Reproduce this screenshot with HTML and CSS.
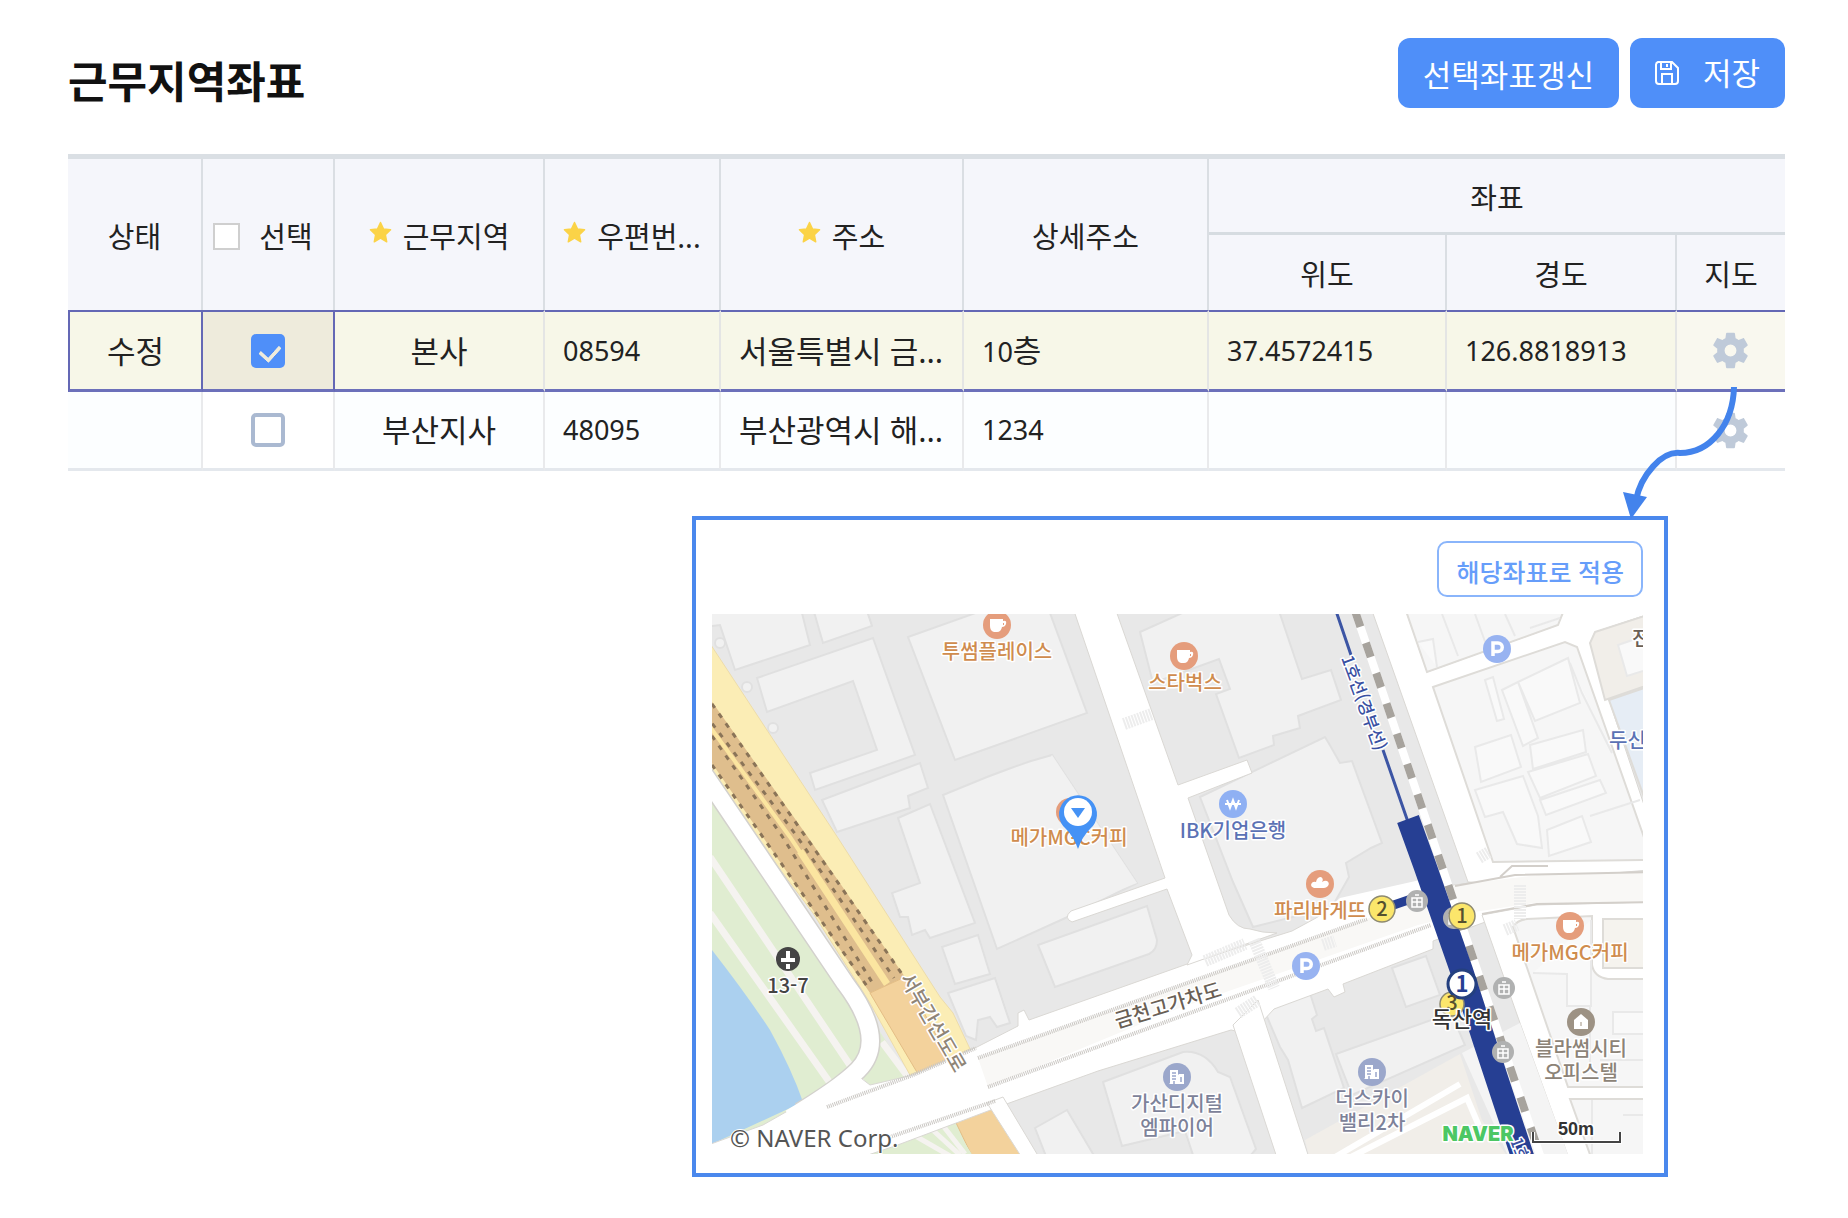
FILE: index.html
```html
<!DOCTYPE html>
<html lang="ko">
<head>
<meta charset="utf-8">
<meta name="viewport" content="width=device-width, initial-scale=1">
<title>근무지역좌표</title>
<link rel="stylesheet" href="styles.css">
</head>
<body>
<svg class="sprite" width="0" height="0" aria-hidden="true">
  <symbol id="star" viewBox="0 0 24 24"><path d="M12 1.5l3.2 6.8 7.3.9-5.4 5.1 1.4 7.4L12 18l-6.500 3.700 1.400-7.400L1.500 9.200l7.300-.9z" fill="#fbd347" stroke="#fbd347" stroke-width="1.500" stroke-linejoin="round"/></symbol>
  <symbol id="gear" viewBox="2 2 20 20"><path fill="#bfcad9" d="M19.140 12.940c.04-.3.06-.61.06-.94 0-.32-.02-.64-.07-.94l2.030-1.580c.18-.14.23-.41.12-.61l-1.920-3.320c-.12-.22-.37-.29-.59-.22l-2.390.96c-.5-.38-1.030-.7-1.620-.94l-.36-2.540c-.04-.24-.24-.41-.48-.41h-3.840c-.24 0-.43.17-.47.41l-.36 2.540c-.59.24-1.130.57-1.620.94l-2.390-.96c-.22-.08-.47 0-.59.22L2.740 8.870c-.12.21-.08.47.12.61l2.030 1.580c-.05.3-.09.63-.09.94s.02.64.07.94l-2.030 1.580c-.18.14-.23.41-.12.61l1.920 3.320c.12.22.37.29.59.22l2.390-.96c.5.38 1.030.7 1.620.94l.36 2.540c.05.24.24.41.48.41h3.840c.24 0 .44-.17.47-.41l.36-2.540c.59-.24 1.130-.56 1.620-.94l2.390.96c.22.08.47 0 .59-.22l1.920-3.320c.12-.22.07-.47-.12-.61l-2.010-1.580zM12 15.200A3.200 3.200 0 1 1 12 8.800a3.200 3.200 0 0 1 0 6.400z"/></symbol>
  <symbol id="cafe" viewBox="-14 -14 28 28"><circle r="14" fill="#e59d7c"/><path d="M-7-6H6v2q4-1 3 3-1 3-4 3-1 5-5 5h-3q-4-1-4-6z" fill="#fff"/><path d="M6-2v2h1v-2z" fill="#e59d7c"/></symbol>
  <symbol id="bread" viewBox="-14 -14 28 28"><circle r="14" fill="#e59d7c"/><path d="M-9 1q1-4 5-3 1-5 5-5 3 2 1 5 3-2 5-1 3 2 1 5-2 2-4 2h-10q-3-1-3-3z" fill="#fff"/></symbol>
  <symbol id="parking" viewBox="-14 -14 28 28"><circle r="14" fill="#98b3f1"/><path d="M-4 7V-6H1a4 4 0 0 1 0 8.500H-4" fill="none" stroke="#fff" stroke-width="3.500"/></symbol>
  <symbol id="bank" viewBox="-14 -14 28 28"><circle r="14" fill="#8fb0f3"/><path d="M-6-4l3 8 3-8 3 8 3-8M-8 0H8" fill="none" stroke="#fff" stroke-width="2"/></symbol>
  <symbol id="office" viewBox="-14 -14 28 28"><circle r="14" fill="#9ba7cb"/><path d="M-7 7V-7H1V7M2-3H7V7H-8" fill="#fff"/><path d="M-5-4h4M-5-1h4M-5 2h4M-3 7V4M4 0v5" stroke="#9ba7cb" stroke-width="1.500"/></symbol>
  <symbol id="home" viewBox="-14 -14 28 28"><circle r="14" fill="#9d9284"/><path d="M0-8l7 6v9H-7v-9z" fill="#fff"/><path d="M0 4V0" stroke="#cfc8bf" stroke-width="2"/></symbol>
  <symbol id="lift" viewBox="-11 -11 22 22"><circle r="11" fill="#b0b1b1"/><path d="M-5-3H5V6H-5zM-2-6H2M-5 1H5M0-3V6" fill="none" stroke="#fff" stroke-width="1.500"/></symbol>
</svg>

<header class="page-head">
  <h1 class="page-title">근무지역좌표</h1>
  <div class="actions">
    <button type="button" class="btn btn-refresh">선택좌표갱신</button>
    <button type="button" class="btn btn-save">
      <svg class="save-icon" viewBox="0 0 24 24" aria-hidden="true"><path d="M3 1h14l6 6v13a3 3 0 0 1-3 3H4a3 3 0 0 1-3-3V4a3 3 0 0 1 2-3zM6 1v7h10V1M12 3v3M7 22v-9h10v9" fill="none" stroke="#fff" stroke-width="2"/></svg>
      <span>저장</span>
    </button>
  </div>
</header>

<main>
  <table class="grid">
    <colgroup>
      <col class="c-state"><col class="c-check"><col class="c-region"><col class="c-zip"><col class="c-addr"><col class="c-detail"><col class="c-lat"><col class="c-lng"><col class="c-map">
    </colgroup>
    <thead>
      <tr class="head-top">
        <th rowspan="2">상태</th>
        <th rowspan="2"><label class="check-all"><input type="checkbox" class="box-all">선택</label></th>
        <th rowspan="2"><span class="required"><svg class="star" aria-hidden="true"><use href="#star"/></svg>근무지역</span></th>
        <th rowspan="2"><span class="required"><svg class="star" aria-hidden="true"><use href="#star"/></svg>우편번...</span></th>
        <th rowspan="2"><span class="required"><svg class="star" aria-hidden="true"><use href="#star"/></svg>주소</span></th>
        <th rowspan="2">상세주소</th>
        <th colspan="3" class="group">좌표</th>
      </tr>
      <tr class="head-sub">
        <th>위도</th><th>경도</th><th>지도</th>
      </tr>
    </thead>
    <tbody>
      <tr class="row selected">
        <td class="mid">수정</td>
        <td class="mid pick"><input type="checkbox" class="box" aria-label="본사 선택" checked></td>
        <td class="mid">본사</td>
        <td class="num">08594</td>
        <td>서울특별시 금...</td>
        <td class="num">10<span class="unit">층</span></td>
        <td class="num">37.4572415</td>
        <td class="num">126.8818913</td>
        <td class="mid tool"><button type="button" class="gear-btn" aria-label="본사 지도"><svg class="gear"><use href="#gear"/></svg></button></td>
      </tr>
      <tr class="row">
        <td class="mid"></td>
        <td class="mid pick"><input type="checkbox" class="box" aria-label="부산지사 선택"></td>
        <td class="mid">부산지사</td>
        <td class="num">48095</td>
        <td>부산광역시 해...</td>
        <td class="num">1234</td>
        <td></td>
        <td></td>
        <td class="mid tool"><button type="button" class="gear-btn" aria-label="부산지사 지도"><svg class="gear"><use href="#gear"/></svg></button></td>
      </tr>
    </tbody>
  </table>

  <section class="map-panel">
    <svg class="arrow" viewBox="1616 380 130 142" aria-hidden="true">
      <path d="M1734 387C1733 425 1710 453 1680 453C1662 451 1641 475 1636 500" fill="none" stroke="#4383ec" stroke-width="6"/>
      <path d="M1623 492l24 5-16 22z" fill="#4383ec"/>
    </svg>
    <button type="button" class="apply-btn">해당좌표로 적용</button>
    <svg class="map" viewBox="712 614 931 540" role="img" aria-label="지도">
      <rect x="712" y="614" width="931" height="540" fill="#e8e8e8"/>

      <!-- buildings, west -->
      <g class="bldg">
        <path d="M705 605h95l10 40-75 25-15-45-15 2z"/>
        <path d="M812 605l11 38 49-17-7-21z"/>
        <circle cx="720" cy="643" r="5"/><circle cx="747" cy="687" r="5"/><circle cx="773" cy="728" r="5"/>
        <path d="M757 678l116-40 42 117-100 35-5-17 67-23-24-69-86 31z"/>
        <path d="M908 637l90-32h49l40 108-132 47z"/>
        <path d="M822 800l98-37 8 25-20 8 2 12-73 24z"/>
        <path d="M898 818l32-14 45 119-45 15-5-8-13 5-4-18-8 0-8-24 28-10z"/>
        <path d="M943 795l44-18 24-9 20-7 21-6 85 128-65 32-75 34z"/>
        <path d="M1052 755l85 128-40 16-60-120z" stroke="none"/>
        <path d="M942 947l36-12 12 39-35 10z"/>
        <path d="M948 993l47-15 15 45-13 4-7-10-12 3-2 20-10-4z"/>
        <path d="M1038 945l109-39 10 34q0 10-8 14l-94 33z"/>
        <path d="M1103 1082l80-30q22-2 35 20l12 5 26 72-10 12h-51l-10-30-63 15z"/>
        <path d="M1035 1128l32-18 32 54h-50z"/>
      </g>
      <!-- buildings, middle -->
      <g class="bldg">
        <path d="M1140 632l60-27h77l25 74 29-9 10 30-43 16 2 12-27 8 1 9-35 13-23-64 14-5-11-30-22 8-44 16z"/>
        <path d="M1200 797l125-60 6 10 9 16 12-2 30 82-11 5-25 15 3 14-17 30-79 20-20-45z"/>
        <path d="M1262 1005l46-18 9 28-5 4 4 12 8-3 20 60-42 20-14-48-8-13z"/>
        <path d="M1392 968l34-12 14 39-34 12z"/>
        <path d="M1336 1054l115-41 14 32-113 50z"/>
      </g>

      <!-- riverside -->
      <path d="M712 780l200 300 45 40 20 34H712z" fill="#e0edd1"/>
      <path d="M712 950q35 45 58 80 22 40 33 72l-91 42z" fill="#abd0ef"/>
      <g fill="none" stroke="#f5f3f0" stroke-width="7"><path d="M710 857L868 1092M710 913L835 1090M882 1042l32 43"/></g>

      <!-- expressway -->
      <path d="M705 636L838 838 940 997l13 16 17 36-60 26-40-72-57-90L705 770z" fill="#fbedb5" stroke="#eddcaa"/>
      <path d="M705 692L810 840l95 137-35 16L758 830 705 753z" fill="#dfbe8d"/>
      <g fill="none" stroke="#8a7458" stroke-width="3" stroke-dasharray="5 7"><path d="M705 694L808 840l94 134M705 755l55 78 109 156M705 726l77 110 93 151M705 714L796 835l98 143"/></g>
      <path d="M705 720L790 837l96 145" fill="none" stroke="#fbe5a0" stroke-width="4"/>
      <path d="M800 851l87 133" fill="none" stroke="#fbe5a0" stroke-width="7"/>
      <path d="M870 993l35-16 46 86-33 11z" fill="#f3d29c" stroke="#e3bd85"/>
      <path d="M945 1100l42-2 40 62h-53z" fill="#f3d29c" stroke="#e3bd85"/>
      <path d="M880 1136l66-24 27 44H838z" fill="#e0edd1"/>
      <path d="M905 1130l45 26M925 1123l35 32M937 1118l28 36" stroke="#f5f3f0" stroke-width="5"/>

      <!-- streets -->
      <path d="M704 774L845 983Q888 1040 858 1070 840 1088 800 1112" fill="none" stroke="#d3d1cd" stroke-width="20"/>
      <g class="street">
        <path d="M700 1148L763 1125 800 1104 853 1072 870 1085 913 1075 977 1047 1018 1026V1013l6-3 5 10 161-57 102-32 48-26 87-15 28-5 84-12 120-2v33h-112l-48 13-66 24v8l-90 35 2 8-11 5-6-8-54 20-23 25-20-4-133 41-97 35-13 5-93 35-60 20H700z"/>
        <path d="M1233 1025l25-25 55 170h-32z"/>
        <path d="M987 1103l16-6 40 67h-17z"/>
        <path d="M1072 605h42l64 180 69-25 5 13-64 25 41 117q8 14 21 14 12 4 27 4l-90 32 5-10-25-66-95 33q-9-4-1-11l94-33z"/>
        <path d="M1370 605h34l23 67 131-47 8-20h95v5l-66 22-5 11 60 180v47l-157 13-25-1z"/>
        <path d="M1482 915l54-10 115-3v262h-80l-51-141z"/>
      </g>
      <path d="M704 774L845 983Q888 1040 858 1070 840 1088 790 1118" fill="none" stroke="#fff" stroke-width="17"/>
      <path d="M1340 898l80-18 30 20-100 32-60 10z" fill="#fff"/>

      <!-- east blocks -->
      <g class="block">
        <path d="M1404 605h162l-8 20-131 47z"/>
        <path d="M1433 687l132-45 12 5 75 213-159 2z"/>
        <path d="M1513 927q4-7 14-8l65-3v49q2 12 16 14h44v108h-84z"/>
        <path d="M1570 1099h82v61h-60z"/>
        <path d="M1595 632l56-18v70l-46 16-15-57z" fill="#f1eee9"/>
        <path d="M1609 700l44-15v137z" fill="#e6edf5"/>
        <path d="M1603 919h50v49h-50z" fill="#f5f3ee"/>
      </g>
      <g class="lot">
        <path d="M1418 642l15-3 4 28M1442 614l16 42M1475 614l12 33M1505 614l10 22M1530 628l30-10"/>
        <path d="M1475 747l36-12 10 32-40 15zM1530 745l53-15 3 22-53 17zM1485 680l8-3 11 42-7 2zM1502 690l16-8 20 56-15 8zM1518 682l50-24 12 45-45 18zM1528 772l60-18 8 22-56 22zM1540 800l60-20 6 13-60 22zM1475 790l48-14 15 40 4 32-25-4-14-32-18 5zM1547 830l35-14 9 26-42 14zM1590 816l50-16M1570 663l12 30 30 60"/>
        <path d="M1533 973l34 1v32h24v-86M1613 1012h40v22h-40zM1600 1060h50M1592 1100v54M1623 1115h30M1618 645l35-12v35l-26 8zM1590 1006v60"/>
      </g>
      <path d="M1305 1140l155-86 22 66 28 40h-200z" fill="#f1eee9"/>
      <path d="M1345 1160l122-62 12 28M1330 1160l130-76" fill="none" stroke="#fff" stroke-width="6"/>
      <path d="M1462 1053l58-30 50 137h-60z" fill="#f4f4f4"/>

      <!-- overpass -->
      <path d="M978 1058l212-76 177-63 88-34 84-10 114-3v31h-120l-65 10-50 12-241 84-189 78z" fill="#f9f8f6"/>
      <g fill="none" stroke="#c9c6c2" stroke-width="4" stroke-dasharray="1 1"><path d="M827 1107l86-32 63-27M978 1058l212-76 177-63M988 1087l202-74 241-88M890 1137l105-36"/></g>
      <g fill="none" stroke="#d3cfca" stroke-width="2"><path d="M1455 886l60-11 138-3M1482 914l55-10 115-2M1500 877l12-11h36"/></g>
      <g class="crossing"><path d="M1124 724l28-10M1205 961l40-17M1254 940l20 48M1238 1013l20-13M1520 885v34M1505 930l12-5M1323 945l12-4M1479 858l10-6"/></g>

      <!-- railway -->
      <path d="M1353 605l97 285 92 271" fill="none" stroke="#fff" stroke-width="8"/>
      <path d="M1353 605l97 285 92 271" fill="none" stroke="#a7a39d" stroke-width="8" stroke-dasharray="15 17" stroke-dashoffset="-8"/>
      <path d="M1382 909l35-12" stroke="#263f93" stroke-width="9"/>
      <path d="M1334 605l17 50M1383 750l25 72" stroke="#3c55a4" stroke-width="3"/>
      <path d="M1408 819l17 47 37 106 22 68 41 124" fill="none" stroke="#263f93" stroke-width="23"/>

      <!-- place markers -->
      <use href="#cafe" x="983" y="611" width="28" height="28"/>
      <use href="#cafe" x="1170" y="642" width="28" height="28"/>
      <use href="#cafe" x="1056" y="798" width="28" height="28"/>
      <use href="#cafe" x="1556" y="912" width="28" height="28"/>
      <use href="#bread" x="1306" y="870" width="28" height="28"/>
      <use href="#bank" x="1219" y="790" width="28" height="28"/>
      <use href="#parking" x="1483" y="635" width="28" height="28"/>
      <use href="#parking" x="1292" y="952" width="28" height="28"/>
      <use href="#office" x="1163" y="1063" width="28" height="28"/>
      <use href="#office" x="1358" y="1058" width="28" height="28"/>
      <use href="#home" x="1567" y="1008" width="28" height="28"/>
      <use href="#lift" x="1406" y="890" width="22" height="22"/>
      <use href="#lift" x="1443" y="907" width="22" height="22"/>
      <use href="#lift" x="1493" y="977" width="22" height="22"/>
      <use href="#lift" x="1492" y="1041" width="22" height="22"/>
      <g fill="#fbe66b" stroke="#8e8a70" stroke-width="1.500"><circle cx="1382" cy="909" r="13"/><circle cx="1462" cy="916" r="13"/><circle cx="1452" cy="1004" r="12"/></g>
      <circle cx="1462" cy="984" r="14" fill="#fff" stroke="#24407f" stroke-width="3"/>
      <circle cx="788" cy="959" r="12" fill="#444"/><path d="M788 951v8M781 960h14M788 964v5" stroke="#fff" stroke-width="4"/>

      <g class="label">
        <g class="exit"><text x="1382" y="916">2</text><text x="1462" y="923">1</text><text x="1452" y="1010">3</text></g>
        <text class="line-no" x="1462" y="992">1</text>
        <g class="food">
          <text x="997" y="659">투썸플레이스</text><text x="1185" y="690">스타벅스</text><text x="1069" y="845">메가MGC커피</text>
          <text x="1320" y="918">파리바게뜨</text><text x="1570" y="960">메가MGC커피</text>
        </g>
        <g class="bank"><text x="1233" y="838">IBK기업은행</text><text class="from-left" x="1609" y="748">두신</text></g>
        <g class="office"><text x="1177" y="1111">가산디지털</text><text x="1177" y="1135">엠파이어</text><text x="1372" y="1106">더스카이</text><text x="1372" y="1130">밸리2차</text></g>
        <g class="home"><text x="1581" y="1056">블라썸시티</text><text x="1581" y="1080">오피스텔</text></g>
        <text class="road from-left" x="1632" y="646">전</text>
        <text class="station" x="1462" y="1027">독산역</text>
        <text class="exit-no" x="788" y="993">13-7</text>
        <text class="road faint" transform="translate(927 1026) rotate(60)">서부간선도로</text>
        <text class="road" transform="translate(1170 1012) rotate(-17)">금천고가차도</text>
        <text class="rail" transform="translate(1358 705) rotate(70)">1호선(경부선)</text>
        <text class="rail" transform="translate(1514 1152) rotate(70)">1호</text>
        <text class="naver" x="1478" y="1141">NAVER</text>
        <text class="scale" x="1576" y="1135">50m</text>
      </g>
      <path d="M1533 1132v10h87v-10" fill="none" stroke="#fff" stroke-width="4"/>
      <path d="M1533 1132v10h87v-10" fill="none" stroke="#444" stroke-width="2"/>
      <text class="copyright" x="730" y="1147">© NAVER Corp.</text>

      <!-- selected position -->
      <path d="M1078 849q-4-12-12-20a19 19 0 1 1 24 0q-8 8-12 20z" fill="#4592f5"/>
      <circle cx="1078" cy="812" r="14" fill="#fff"/>
      <path d="M1071 808h14l-7 10z" fill="#4592f5"/>
    </svg>
  </section>
</main>
</body>
</html>
```
FILE: styles.css
```css
* {
  box-sizing: border-box;
}

body {
  margin: 0;
  padding: 38px 63px 40px 68px;
  background: #fff;
  color: #222;
  font-family: "Noto Sans", "Noto Sans CJK KR", sans-serif;
}

button {
  font-family: inherit;
  cursor: pointer;
}

.sprite {
  position: absolute;
}

/* Page header */
.page-head {
  display: flex;
  justify-content: space-between;
  align-items: flex-start;
  margin-bottom: 46px;
}

.page-title {
  margin: 0;
  padding-top: 18px;
  font-size: 43px;
  line-height: 52px;
  color: #111;
}

.actions {
  display: flex;
  gap: 11px;
}

.btn {
  display: flex;
  align-items: center;
  justify-content: center;
  height: 70px;
  padding: 0 25px;
  border: 0;
  border-radius: 12px;
  background: #4f8ff9;
  color: #fff;
  font-size: 31px;
  line-height: 40px;
}

.btn-refresh {
  padding-top: 4px;
}

.btn-save {
  gap: 24px;
}

.save-icon {
  width: 24px;
  height: 24px;
}

/* Data grid */
.grid {
  width: 100%;
  table-layout: fixed;
  border-collapse: separate;
  border-spacing: 0;
  border-top: 5px solid #dadfe4;
}

.c-state { width: 135px; }
.c-check { width: 132px; }
.c-region { width: 210px; }
.c-zip { width: 176px; }
.c-detail { width: 245px; }
.c-lat { width: 238px; }
.c-lng { width: 230px; }
.c-map { width: 108px; }

th {
  padding: 4px 0 0;
  border-right: 2px solid #dadee3;
  background: #f5f6fb;
  font-size: 29px;
  font-weight: 400;
  line-height: 36px;
  white-space: nowrap;
}

.head-top { height: 76px; }
.head-sub { height: 75px; }

.group {
  border-right: 0;
  border-bottom: 3px solid #d6dce1;
}

.head-sub th:last-child,
.row td:last-child {
  border-right: 0;
}

.required {
  display: inline-flex;
  gap: 11px;
  vertical-align: top;
}

.star {
  width: 23px;
  height: 23px;
  margin-top: 2px;
}

.check-all {
  display: inline-flex;
  align-items: center;
  gap: 19px;
  padding-right: 10px;
  vertical-align: top;
}

.box-all {
  appearance: none;
  width: 27px;
  height: 27px;
  margin: 0;
  border: 2px solid #cfcfcf;
  background: #fff;
}

.row td {
  height: 79px;
  padding: 0 18px;
  border-right: 2px solid #e9eaec;
  border-bottom: 3px solid #e4e8ed;
  background: #fcfeff;
  font-size: 31px;
  line-height: 40px;
  white-space: nowrap;
  overflow: hidden;
}

.row .num {
  font-size: 27px;
}

.unit {
  font-size: 31px;
}

.row .mid {
  padding: 0;
  text-align: center;
}

.row .pick,
.row .tool {
  background: #fff;
}

.selected td {
  height: 82px;
  border-top: 2px solid #6468b5;
  border-bottom: 3px solid #6c70ba;
  border-right-color: #e4e5e4;
  background: #f7f7e8;
}

.selected td:first-child {
  border-left: 2px solid #6468b5;
}

.selected td:first-child,
.selected .pick {
  border-right-color: #6468b5;
}

.selected .pick { background: #eeebdc; }
.selected .tool { background: #f9f8ef; }

.box {
  appearance: none;
  display: block;
  width: 34px;
  height: 34px;
  margin: 0 auto;
  border: 4px solid #aab9d1;
  border-radius: 5px;
  background: #fff;
}

.box:checked {
  padding: 7px 0 0 12px;
  border: 0;
  background: #4f8ff9;
}

.box:checked::after {
  content: "";
  display: block;
  width: 10px;
  height: 16px;
  border: solid #eeebdc;
  border-width: 0 4px 4px 0;
  border-radius: 2px;
  transform: rotate(42deg);
}

.gear-btn {
  display: block;
  margin: 0 auto;
  padding: 0;
  border: 0;
  background: none;
}

.gear {
  display: block;
  width: 37px;
  height: 37px;
}

/* Map panel */
.map-panel {
  position: relative;
  display: flex;
  flex-direction: column;
  gap: 17px;
  width: 976px;
  max-width: 100%;
  margin: 45px 117px 0 auto;
  padding: 21px 21px 19px 16px;
  border: 4px solid #4a88ed;
}

.arrow {
  position: absolute;
  top: -140px;
  right: -82px;
  width: 130px;
  height: 142px;
}

.apply-btn {
  align-self: flex-end;
  height: 56px;
  padding: 4px 17px 0;
  border: 2px solid #8ab5fb;
  border-radius: 10px;
  background: #fff;
  color: #669dfa;
  font-size: 25px;
  font-weight: 500;
}

.map {
  display: block;
  width: 100%;
}

.bldg {
  fill: #f1f1f1;
  stroke: #e0e0e0;
  stroke-width: 2px;
}

.street {
  fill: #fff;
  stroke: #dad8d4;
  stroke-width: 1px;
}

.block {
  fill: #f6f6f6;
  stroke: #dedcd8;
  stroke-width: 2px;
}

.lot {
  fill: #f9f9f9;
  stroke: #e9e9e9;
  stroke-width: 2px;
}

.crossing {
  fill: none;
  stroke: #ededed;
  stroke-width: 12px;
  stroke-dasharray: 2px 1px;
}

.label {
  font-family: "Noto Sans CJK KR", sans-serif;
  font-size: 20px;
  font-weight: 500;
  text-anchor: middle;
  paint-order: stroke;
  stroke: #fff;
  stroke-width: 3px;
  stroke-linejoin: round;
}

.label .from-left { text-anchor: start; }
.label .food { fill: #cf8c4e; }
.label .bank { fill: #5b72b5; }
.label .office { fill: #7d8299; }
.label .home { fill: #8c8377; }
.label .road { fill: #6a5f55; }
.label .faint { fill: #8f8577; }

.label .exit {
  fill: #55502f;
  stroke: none;
}

.label .line-no {
  fill: #263f93;
  font-size: 22px;
  font-weight: 700;
}

.label .station {
  fill: #333;
  font-size: 22px;
}

.label .exit-no { fill: #444; }

.label .rail {
  fill: #3950a2;
  font-size: 17px;
}

.label .naver {
  fill: #4cc764;
  font-family: Inter, sans-serif;
  font-size: 20px;
  font-weight: 900;
}

.label .scale {
  fill: #333;
  font-family: "Liberation Sans", sans-serif;
  font-size: 18px;
  font-weight: 700;
}

.copyright {
  fill: #555;
  font-size: 24px;
  paint-order: stroke;
  stroke: #fff;
  stroke-width: 2px;
}
```
